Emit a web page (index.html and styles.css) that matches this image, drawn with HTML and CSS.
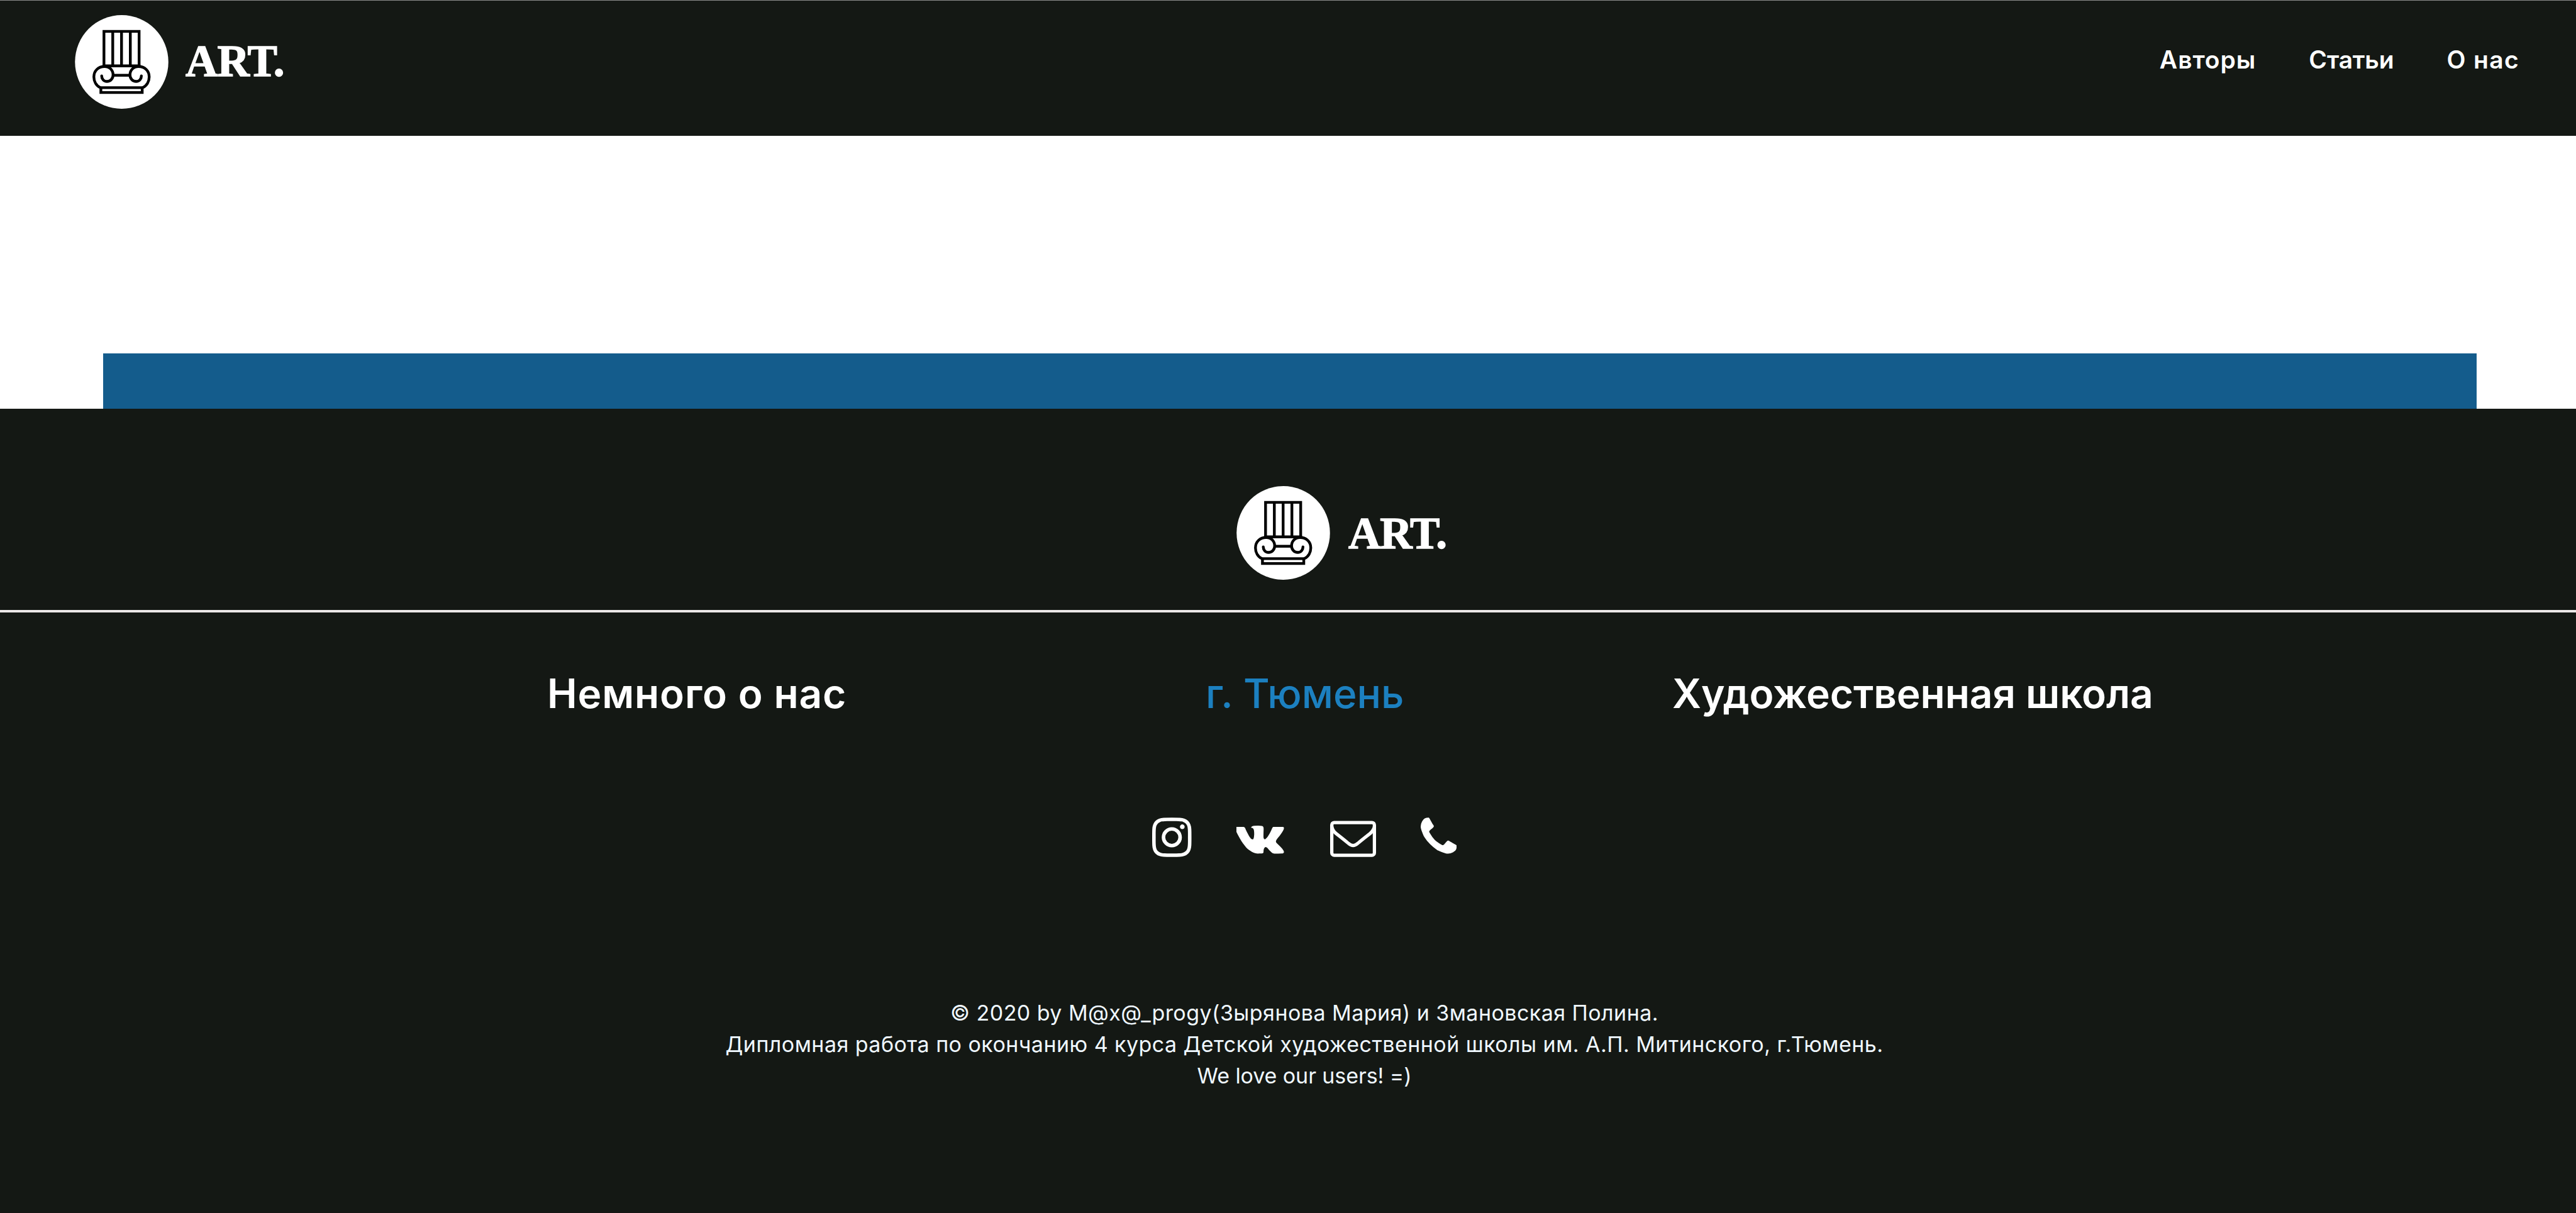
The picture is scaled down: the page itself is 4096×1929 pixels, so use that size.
FILE: index.html
```html
<!DOCTYPE html>
<html lang="ru">
<head>
  <meta charset="utf-8">
  <title>ART.</title>
  <link rel="stylesheet" href="styles.css">
</head>
<body>
  <svg class="defs" aria-hidden="true">
    <symbol id="column" viewBox="0 0 287 288">
      <ellipse cx="143.500" cy="144" rx="143.500" ry="144" fill="#fff"/>
      <g fill="none" stroke="#000" stroke-width="8.500">
        <path d="M89 155V50H197V155"/>
        <path d="M116 50V155M143 50V155M170 50V155"/>
        <path d="M85 156H201"/>
        <path d="M116 185H170"/>
        <path stroke-linecap="round" d="M82 187C82 196 88 204 98 204C109 204 117 195 117 184C117 169 106 158 91 158C71 158 58 172 58 190C58 204 65 217 78 223"/>
        <path stroke-linecap="round" d="M204 187C204 196 198 204 188 204C177 204 169 195 169 184C169 169 180 158 195 158C215 158 228 172 228 190C228 204 221 217 208 223"/>
        <path d="M76 223H210"/>
        <path d="M79.500 223V238H206.500V223"/>
      </g>
    </symbol>
  </svg>

  <header class="header">
    <a class="brand">
      <svg class="brand-mark"><use href="#column"/></svg>
      <span class="brand-name">ART.</span>
    </a>
    <nav class="nav">
      <a class="nav-authors">Авторы</a>
      <a class="nav-articles">Статьи</a>
      <a class="nav-about">О нас</a>
    </nav>
  </header>

  <main class="main">
    <div class="banner"></div>
  </main>

  <footer class="footer">
    <div class="footer-top">
      <a class="brand brand-footer">
        <svg class="brand-mark"><use href="#column"/></svg>
        <span class="brand-name">ART.</span>
      </a>
    </div>
    <div class="links">
      <a class="link-about">Немного о нас</a>
      <a class="link-city">г. Тюмень</a>
      <a class="link-school">Художественная школа</a>
    </div>
    <div class="social">
      <svg class="icon-instagram" viewBox="128 0 1536 1792"><path d="M1152 896q0-106-75-181t-181-75-181 75-75 181 75 181 181 75 181-75 75-181zm138 0q0 164-115 279t-279 115-279-115-115-279 115-279 279-115 279 115 115 279zm108-410q0 38-27 65t-65 27-65-27-27-65 27-65 65-27 65 27 27 65zm-502-220q-7 0-76.500-.5t-105.500 0-96.500 3-103 10-71.500 18.500q-50 20-88 58t-58 88q-11 29-18.500 71.500t-10 103-3 96.500 0 105.500.5 76.500-.5 76.500 0 105.500 3 96.500 10 103 18.500 71.500q20 50 58 88t88 58q29 11 71.500 18.500t103 10 96.500 3 105.500 0 76.500-.5 76.500.5 105.500 0 96.500-3 103-10 71.500-18.500q50-20 88-58t58-88q11-29 18.500-71.500t10-103 3-96.500 0-105.500-.5-76.500.5-76.500 0-105.500-3-96.500-10-103-18.500-71.500q-20-50-58-88t-88-58q-29-11-71.500-18.500t-103-10-96.500-3-105.500 0-76.500.5zm768 630q0 229-5 317-10 208-124 322t-322 124q-88 5-317 5t-317-5q-208-10-322-124t-124-322q-5-88-5-317t5-317q10-208 124-322t322-124q88-5 317-5t317 5q208 10 322 124t124 322q5 88 5 317z"/></svg>
      <svg class="icon-vk" viewBox="0 0 1920 1792"><path d="M1853 520q23 64-150 294-24 32-65 85-78 100-90 131-17 41 14 81 17 21 81 82h1l1 1 1 1 2 2q141 131 191 221 3 5 6.500 12.500t7 26.500-.5 34-25 27.500-59 12.500l-256 4q-24 5-56-5t-52-22l-20-12q-30-21-70-64t-68.500-77.500-61-58-56.500-15.500q-3 1-8 3.500t-17 14.500-21.500 29.500-17 52-6.500 77.500q0 15-3.500 27.500t-7.500 18.500l-4 5q-18 19-53 22h-115q-71 4-146-16.500t-131.500-53-103-66-70.500-57.500l-25-24q-10-10-27.500-30t-71.500-91-106-151-122.500-211-130.500-272q-6-16-6-27t3-16l4-6q15-19 57-19l274-2q12 2 23 6.500t16 8.500l5 3q16 11 24 32 20 50 46 103.500t41 81.500l16 29q29 60 56 104t48.500 68.500 41.500 38.500 34 14 27-5q2-1 5-5t12-22 13.500-47 9.500-81 0-125q-2-40-9-73t-14-46l-6-12q-25-34-85-43-13-2 5-24 16-19 38-30 53-26 239-24 82 1 135 13 20 5 33.500 13.500t20.500 24 10.500 32 3.500 45.500-1 55-2.500 70.500-1.500 82.500q0 11-1 42t-.5 48 3.500 40.500 11.500 39 22.500 24.500q8 2 17 4t26-11 38-34.500 52-67 68-107.500q60-104 107-225 4-10 10-17.500t11-10.500l4-3 5-2.500 13-3 20-.5 288-2q39-5 64 2.500t31 16.500z"/></svg>
      <svg class="icon-mail" viewBox="0 0 1792 1792"><path d="M1664 1504v-768q-32 36-69 66-268 206-426 338-51 43-83 67t-86.500 48.500-102.500 24.500h-2q-48 0-102.500-24.500t-86.500-48.500-83-67q-158-132-426-338-37-30-69-66v768q0 13 9.500 22.500t22.500 9.500h1472q13 0 22.500-9.500t9.500-22.500zm0-1051v-24.500l-.5-13-3-12.500-5.500-9-9-7.500-14-2.500h-1472q-13 0-22.500 9.500t-9.500 22.500q0 168 147 284 193 152 401 317 6 5 35 29.500t46 37.500 44.500 31.500 50.500 27.500 43 9h2q20 0 43-9t50.500-27.500 44.500-31.500 46-37.500 35-29.500q208-165 401-317 54-43 100.500-115.500t46.500-131.500zm128-37v1088q0 66-47 113t-113 47h-1472q-66 0-113-47t-47-113v-1088q0-66 47-113t113-47h1472q66 0 113 47t47 113z"/></svg>
      <svg class="icon-phone" viewBox="192 0 1408 1792"><path d="M1600 1240q0 27-10 70.500t-21 68.500q-21 50-122 106-94 51-186 51-27 0-53-3.500t-57.500-12.500-47-14.500-55.500-20.500-49-18q-98-35-175-83-127-79-264-216t-216-264q-48-77-83-175-3-9-18-49t-20.500-55.500-14.500-47-12.500-57.500-3.500-53q0-92 51-186 56-101 106-122 25-11 68.500-21t70.500-10q14 0 21 3 18 6 53 76 11 19 30 54t35 63.500 31 53.500q3 4 17.500 25t21.500 35.500 7 28.500q0 20-28.500 50t-62 55-62 53-28.500 46q0 9 5 22.500t8.500 20.500 14 24 11.500 19q76 137 174 235t235 174q2 1 19 11.500t24 14 20.500 8.500 22.500 5q18 0 46-28.500t53-62 55-62 50-28.500q14 0 28.500 7t35.500 21.500 25 17.500q25 15 53.500 31t63.500 35 54 30q70 35 76 53 3 7 3 21z"/></svg>
    </div>
    <div class="copyright">
      <p>© 2020 by M@x@_progy(Зырянова Мария) и Змановская Полина.</p>
      <p>Дипломная работа по окончанию 4 курса Детской художественной школы им. А.П. Митинского, г.Тюмень.</p>
      <p class="thanks">We love our users! =)</p>
    </div>
  </footer>
</body>
</html>
```
FILE: styles.css
```css
* {
  box-sizing: border-box;
}

body {
  margin: 0;
  height: 1929px;
  display: flex;
  flex-direction: column;
  background: #fff;
  color: #fff;
  font-family: Inter, "Open Sans", sans-serif;
  overflow: hidden;
}

.defs {
  position: absolute;
  width: 0;
  height: 0;
}

/* Header */
.header {
  height: 216px;
  padding: 23px 90px 0 119px;
  border-top: 1px solid #8a8c8a;
  background: #141814;
  display: flex;
  justify-content: space-between;
  align-items: flex-start;
}

.brand {
  display: flex;
  align-items: center;
  gap: 27px;
  height: 149px;
}

.brand-mark {
  width: 149px;
  height: 149px;
}

.brand-name {
  margin-bottom: 3px;
  font: 700 71px/72px "Liberation Serif", serif;
  letter-spacing: -0.8px;
  -webkit-text-stroke: 1.5px #fff;
}

.nav {
  display: flex;
  gap: 84px;
  padding-top: 51px;
  font-size: 39px;
  font-weight: 600;
  line-height: 40px;
}

.nav-authors {
  letter-spacing: 0.95px;
}

.nav-articles {
  letter-spacing: -0.19px;
}

.nav-about {
  letter-spacing: 1.35px;
}

/* Page body */
.main {
  height: 434px;
  padding: 346px 158px 0 164px;
}

.banner {
  height: 88px;
  background: #145c8c;
}

/* Footer */
.footer {
  flex: 1;
  background: #141814;
  border-bottom: 1px solid #181414;
}

.footer-top {
  height: 324px;
  padding: 123px 0 0 1966px;
  border-bottom: 4px solid #ece8e8;
}

.brand-footer {
  gap: 29px;
}

.brand-footer .brand-name {
  margin-bottom: 0;
  letter-spacing: -1px;
}

.links {
  display: grid;
  grid-template-columns: 1047px 742px auto;
  padding: 97px 0 0 870px;
  font-size: 64px;
  font-weight: 600;
  line-height: 64px;
}

.link-about {
  letter-spacing: 0.82px;
}

.link-city {
  color: #1c80c0;
  font-weight: 500;
}

.link-school {
  letter-spacing: -0.06px;
}

.social {
  display: flex;
  gap: 71px;
  padding: 160px 0 0 1832px;
  fill: #fff;
}

.social svg {
  height: 73px;
}

.icon-instagram {
  width: 62.5px;
}

.icon-vk {
  width: 78.2px;
}

.icon-mail {
  width: 73px;
}

.icon-phone {
  width: 57.4px;
}

.copyright {
  padding: 218px 0 0 52px;
  color: #f0f8ff;
  font-size: 34px;
  line-height: 50px;
  letter-spacing: 0.45px;
  text-align: center;
}

.copyright p {
  margin: 0;
}

.copyright .thanks {
  letter-spacing: -0.08px;
}
```
